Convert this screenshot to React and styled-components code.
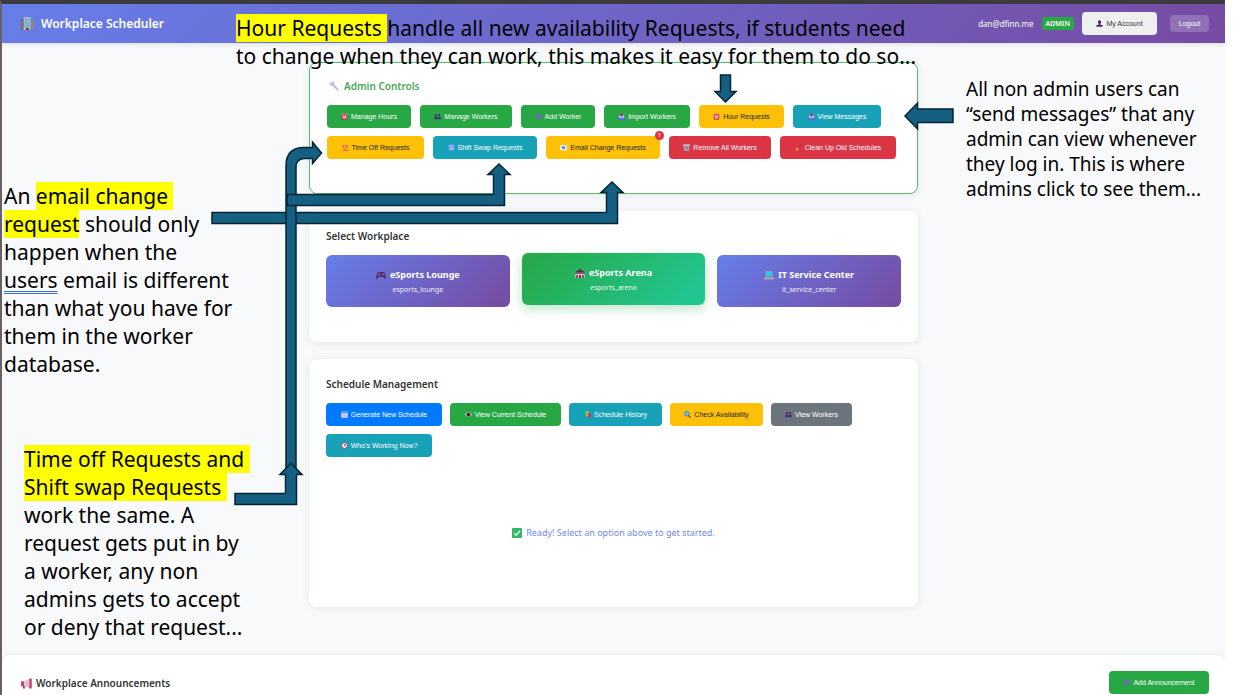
import React from "react";
import styled, { createGlobalStyle, css } from "styled-components";

const Global = createGlobalStyle`
  *, *::before, *::after { box-sizing: border-box; }
  body { margin: 0; background: #fff; font-family: "Noto Sans", "Open Sans", sans-serif; color: #333; }
  h1, h2, p { margin: 0; }
  button { font: inherit; border: 0; cursor: pointer; }
`;

const Slide = styled.div`
  position: relative;
  padding-right: 16px;
`;

const Page = styled.div`
  display: flex;
  flex-direction: column;
  min-height: 100vh;
  background: #f8f9fb;
  border-top: 4px solid #3b3a3c;
  border-left: 2px solid #6b5f67;
  overflow: hidden;
`;

const Header = styled.header`
  display: flex;
  align-items: center;
  justify-content: space-between;
  height: 39px;
  padding: 0 16px 0 19px;
  background: linear-gradient(135deg, #667eea 0%, #764ba2 100%);
  box-shadow: 0 1px 5px rgba(0, 0, 0, 0.12);
`;

const Brand = styled.h1`
  display: flex;
  align-items: center;
  gap: 7px;
  color: #fff;
  font-size: 12px;
  font-weight: 600;
  line-height: 16px;
`;

const Account = styled.div`
  display: flex;
  align-items: center;
  gap: 8px;
  color: #fff;
  font-size: 8px;
`;

const RoleBadge = styled.span`
  padding: 0 4px;
  border-radius: 2px;
  background: #28a745;
  font-size: 7px;
  font-weight: 600;
  line-height: 13px;
`;

const AccountButton = styled.button`
  display: flex;
  align-items: center;
  justify-content: center;
  gap: 3px;
  width: 75px;
  height: 23px;
  border-radius: 4px;
  background: #efefef;
  color: #333;
  font-family: "Liberation Sans", Arial, sans-serif;
  font-size: 7px;
`;

const LogoutButton = styled.button`
  width: 39px;
  height: 17px;
  margin-left: 5px;
  padding: 0;
  border-radius: 4px;
  background: rgba(255, 255, 255, 0.2);
  color: #fff;
  font-family: "Liberation Sans", Arial, sans-serif;
  font-size: 7px;
`;

const Main = styled.main`
  display: flex;
  flex-direction: column;
  gap: 17px;
  width: 100%;
  max-width: 609px;
  margin: 19px auto 48px;
`;

const Card = styled.section`
  padding: 17px 17px ${(p) => p.$bottom}px;
  border-radius: 8px;
  background: #fff;
  box-shadow: 0 1px 8px rgba(0, 0, 0, 0.08);
  ${(p) =>
    p.$outlined &&
    css`
      padding-top: 15px;
      border: 1px solid #5cb971;
    `}
`;

const CardTitle = styled.h2`
  display: flex;
  align-items: center;
  gap: 5px;
  margin-bottom: 11px;
  color: #333;
  font-size: 10px;
  font-weight: 600;
  line-height: 16px;
  ${(p) =>
    p.$green &&
    css`
      padding-left: 2px;
      color: #45a85c;
    `}
`;

const ButtonRow = styled.div`
  display: flex;
  flex-wrap: wrap;
  gap: 8px ${(p) => p.$gap}px;
`;

const tones = {
  green: ["#28a745", "#fff"],
  yellow: ["#ffc107", "#212529"],
  teal: ["#17a2b8", "#fff"],
  red: ["#dc3545", "#fff"],
  blue: ["#007bff", "#fff"],
  gray: ["#6c757d", "#fff"],
};

const ActionButton = styled.button`
  position: relative;
  display: inline-flex;
  align-items: center;
  justify-content: center;
  gap: 3px;
  min-width: ${(p) => p.$width}px;
  height: 23px;
  padding: 0 2px;
  border-radius: 4px;
  background: ${(p) => tones[p.$tone][0]};
  color: ${(p) => tones[p.$tone][1]};
  font-family: "Liberation Sans", Arial, sans-serif;
  font-size: 7px;
  line-height: 8px;
  white-space: nowrap;
`;

const AlertDot = styled.span`
  position: absolute;
  top: -5px;
  right: -4px;
  width: 9px;
  height: 9px;
  border-radius: 50%;
  background: #dc3545;
  color: #fff;
  font-size: 6px;
  font-weight: 700;
  line-height: 9px;
  text-align: center;
`;

const WorkplaceGrid = styled.div`
  display: grid;
  grid-template-columns: repeat(3, 1fr);
  gap: 12px;
`;

const WorkplaceCard = styled.button`
  display: flex;
  flex-direction: column;
  align-items: center;
  justify-content: center;
  gap: 3px;
  height: 52px;
  padding: 2px 0 0;
  border-radius: 6px;
  background: linear-gradient(135deg, #667eea 0%, #764ba2 100%);
  color: #fff;
  ${(p) =>
    p.$active &&
    css`
      background: linear-gradient(135deg, #28a745 0%, #20c997 100%);
      box-shadow: 0 4px 12px rgba(40, 167, 69, 0.3);
      transform: translateY(-2px);
    `}
`;

const WorkplaceName = styled.span`
  display: flex;
  align-items: center;
  gap: 4px;
  font-size: 9px;
  font-weight: 700;
  line-height: 13px;
`;

const WorkplaceId = styled.span`
  font-size: 7px;
  line-height: 12px;
  opacity: 0.9;
`;

const Status = styled.p`
  display: flex;
  align-items: center;
  justify-content: center;
  gap: 4px;
  margin-top: 68px;
  color: #7389e8;
  font-size: 9px;
  line-height: 16px;
`;

const Announcements = styled.section`
  display: flex;
  flex: 1;
  align-items: flex-start;
  justify-content: space-between;
  padding: 16px 16px 0 19px;
  border-radius: 8px 8px 0 0;
  background: #fff;
  box-shadow: 0 0 6px rgba(0, 0, 0, 0.07);
`;

const AnnouncementsTitle = styled.h2`
  display: flex;
  align-items: center;
  gap: 4px;
  font-size: 10px;
  font-weight: 600;
  line-height: 24px;
`;

const Note = styled.p`
  position: absolute;
  top: ${(p) => p.$top}px;
  left: ${(p) => p.$left}px;
  color: #000;
  font-size: ${(p) => (p.$small ? 19 : 21)}px;
  line-height: ${(p) => (p.$small ? 25 : 28)}px;
  white-space: pre;
`;

const Highlight = styled.mark`
  background: #ff0;
  color: inherit;
`;

const Grammar = styled.span`
  text-decoration: underline double #3a6fd8 1px;
  text-underline-offset: 3px;
  text-decoration-skip-ink: none;
`;

const ArrowLayer = styled.svg`
  position: absolute;
  top: 0;
  left: 0;
  pointer-events: none;
`;

const IconSvg = styled.svg`
  flex: none;
  width: ${(p) => p.$size}px;
  height: ${(p) => p.$size}px;
`;

const people = (
  <g fill="#4a2a7a">
    <circle cx="2.8" cy="3" r="1.7" />
    <circle cx="7.2" cy="3" r="1.7" />
    <path d="M.2 9V6.6Q.4 5.2 2 5.2H3.800Q4.700 5.200 4.800 6.200V9ZM5.200 9V6.200Q5.300 5.200 6.200 5.200H8Q9.600 5.200 9.800 6.600V9Z" />
  </g>
);
const inbox = (
  <g>
    <path d="M1 3.500L0 6.500V10H10V6.500L9 3.500Z" fill="#4f6fe0" />
    <path d="M1.500 3.500H8.500L9.200 6.500H6.800L6 7.500H4L3.200 6.500H.8Z" fill="#c3d6fb" />
    <path d="M4 0H6V3H7.600L5 6.200 2.400 3H4Z" fill="#c42a68" />
  </g>
);

const glyphs = {
  building: (
    <g>
      <path d="M0 2L2.500 1V10H0Z" fill="#6f6a78" />
      <path d="M2 0H7.500V10H2Z" fill="#b7b3c2" />
      <path d="M7.500 1.500L10 2.300V10H7.500Z" fill="#8a8494" />
      <path d="M3 1.200H4.300V2.700H3ZM5.200 1.200H6.500V2.700H5.200ZM3 3.600H4.300V5.100H3ZM5.200 3.600H6.500V5.100H5.200ZM3 6H4.300V7.500H3ZM5.200 6H6.500V7.500H5.200Z" fill="#2fb8e8" />
      <path d="M4 8.300H5.800V10H4Z" fill="#4a3238" />
    </g>
  ),
  wrench: (
    <path d="M1.200 1L3 2.700 3.800 2 2.300.4Q4.600 0 5.200 1.900L5 3.200 9.500 7.900Q9.900 9.400 8.300 9.500L3.700 4.800Q1.500 5.200.6 3.300Q.4 2 1.200 1Z" fill="#c3b6d6" />
  ),
  user: (
    <g fill="#45256f">
      <ellipse cx="5" cy="3" rx="2.300" ry="2.800" />
      <path d="M4 5H6V6.400L9.500 7.400V9.800H.5V7.400L4 6.400Z" />
    </g>
  ),
  alarm: (
    <g>
      <circle cx="2" cy="1.700" r="1.500" fill="#e8a33a" />
      <circle cx="8" cy="1.700" r="1.500" fill="#e8a33a" />
      <path d="M2 8L1 10H2.500L3.500 9ZM8 8L9 10H7.500L6.500 9Z" fill="#c22b4a" />
      <circle cx="5" cy="5.300" r="4.200" fill="#e23b58" />
      <circle cx="5" cy="5.300" r="2.500" fill="#fbd3da" />
      <path d="M5 3.500V5.400H6.500" fill="none" stroke="#7b4350" strokeWidth=".8" />
    </g>
  ),
  people,
  plus: <path d="M4 0H6V4H10V6H6V10H4V6H0V4H4Z" fill="#8f55d6" />,
  inbox,
  beach: (
    <g>
      <path d="M.5 5Q1 1 5 1Q8.500 1.300 9.500 4.500Z" fill="#e5484d" />
      <path d="M3.300 4.800Q3.500 2 5 1Q6.500 2 6.300 4.700Z" fill="#ffd7cf" />
      <path d="M4.700 4.600H5.500L6 9H5.200Z" fill="#8a4a2a" />
      <path d="M0 8.500Q4 7 10 8.500V10H0Z" fill="#e8704a" />
    </g>
  ),
  swap: (
    <g>
      <rect width="10" height="10" rx="1" fill="#4a90f0" />
      <path d="M2 4.500V3H7M6 1.600L7.700 3 6 4.400M8 5.500V7H3M4 5.600L2.300 7 4 8.400" fill="none" stroke="#fff" strokeWidth="1" />
    </g>
  ),
  email: (
    <g>
      <rect y="1.500" width="10" height="7.500" rx=".8" fill="#e4ecfa" />
      <path d="M0 2L5 5.700 10 2" fill="none" stroke="#a9bce0" strokeWidth=".7" />
      <circle cx="5" cy="5.200" r="2.100" fill="#3c78dc" />
    </g>
  ),
  trash: (
    <g>
      <path d="M.7 1.500H9.300L8.300 10H1.700Z" fill="#b7b0bd" />
      <path d="M.3.5H9.700V2H.3Z" fill="#d7d2dc" />
      <path d="M3.300 2.500L3.600 9M5 2.500V9M6.700 2.500L6.400 9M1.500 4.500H8.500M1.700 7H8.300" stroke="#77707f" strokeWidth=".6" />
    </g>
  ),
  broom: (
    <g>
      <path d="M9.500.3L4.500 5.800" stroke="#7c3e24" strokeWidth="1.200" />
      <path d="M3.500 4.800L5.700 7Q4 9.500.5 9.700Q1 6.500 3.500 4.800Z" fill="#f2a23c" />
    </g>
  ),
  calendar: (
    <g>
      <rect x=".3" y=".8" width="9.400" height="9" rx=".8" fill="#e5e3f3" />
      <path d="M.3.800H9.700V3.200H.3Z" fill="#4a90e8" />
      <path d="M2.700 4V9.200M5 4V9.200M7.300 4V9.200M1 5.700H9M1 7.700H9" stroke="#a9a4c9" strokeWidth=".6" />
    </g>
  ),
  eye: (
    <g>
      <path d="M0 5Q5-1.500 10 5Q5 11 0 5Z" fill="#f3eef2" />
      <circle cx="5" cy="5" r="3" fill="#6a2f33" />
      <circle cx="5" cy="5" r="1.600" fill="#1d1218" />
    </g>
  ),
  books: (
    <g>
      <path d="M0 1L3 0 4.500 7 1.500 8Z" fill="#44b05a" />
      <path d="M3 .5L6.500 0 7 7 3.800 8Z" fill="#b9c94a" />
      <path d="M5 3L8.500 2 10 9 6.500 10Z" fill="#d8375c" />
    </g>
  ),
  search: (
    <g>
      <path d="M6.300 6.300L9.300 9.300" stroke="#5d3b57" strokeWidth="1.800" />
      <circle cx="4" cy="4" r="3.300" fill="#5cc4f5" stroke="#3573b8" strokeWidth="1" />
    </g>
  ),
  clock: (
    <g>
      <circle cx="5" cy="5" r="4.200" fill="#f6eef0" stroke="#9b3c4a" strokeWidth="1.300" />
      <path d="M5 2.500V5.300L7 5.200" fill="none" stroke="#3c2b33" strokeWidth=".9" />
    </g>
  ),
  gamepad: (
    <g>
      <path d="M2 2H8Q9.300 2.500 10 8.500Q8.500 9.500 7 7H3Q1.500 9.500 0 8.500Q.7 2.500 2 2Z" fill="#4c3470" />
      <circle cx="3" cy="4.500" r="1" fill="#8d7aa8" />
      <circle cx="7.200" cy="4.500" r="1" fill="#b44f78" />
    </g>
  ),
  arena: (
    <g>
      <path d="M5 0V2.500" stroke="#6b2f4c" strokeWidth=".7" />
      <path d="M1 3.500L5 1.300 9 3.500V5H1Z" fill="#50304b" />
      <path d="M.3 4.500H9.700V10H.3Z" fill="#e6c4cf" />
      <path d="M0 4.500H10V5.700H0ZM1.300 7H2.800V10H1.300ZM4 7H6V10H4ZM7.200 7H8.700V10H7.200Z" fill="#5f3350" />
    </g>
  ),
  laptop: (
    <g>
      <path d="M1.200.8H8.800V6.800H1.200Z" fill="#8d8794" />
      <path d="M1.800 1.300H8.200V6.300H1.800Z" fill="#35c6ee" />
      <path d="M1 6.800H9L10 9.300H0Z" fill="#b9b2bc" />
      <path d="M2 7.500H8" stroke="#6c6572" strokeWidth=".6" />
    </g>
  ),
  check: (
    <g>
      <rect width="10" height="10" rx="1" fill="#2fb866" />
      <path d="M2.200 5.200L4.200 7.300 8 2.800" fill="none" stroke="#fff" strokeWidth="1.400" />
    </g>
  ),
  megaphone: (
    <g>
      <path d="M0 3H3V7.500H0Z" fill="#e0356a" />
      <path d="M3 3L7.500 1V9L3 7.500Z" fill="#cfc9dc" />
      <path d="M7.500.5H9.800V9.500H7.500Z" fill="#e0356a" />
      <path d="M1.500 7.500H3.500V9.500H2Z" fill="#8a3c60" />
    </g>
  ),
};

function Icon({ name, size = 7 }) {
  return (
    <IconSvg $size={size} viewBox="0 0 10 10" aria-hidden="true">
      {glyphs[name]}
    </IconSvg>
  );
}

const adminActions = [
  ["alarm", "Manage Hours", "green", 84],
  ["people", "Manage Workers", "green", 92],
  ["plus", "Add Worker", "green", 74],
  ["inbox", "Import Workers", "green", 86],
  ["alarm", "Hour Requests", "yellow", 85],
  ["inbox", "View Messages", "teal", 88],
  ["beach", "Time Off Requests", "yellow", 97],
  ["swap", "Shift Swap Requests", "teal", 104],
  ["email", "Email Change Requests", "yellow", 114, true],
  ["trash", "Remove All Workers", "red", 102],
  ["broom", "Clean Up Old Schedules", "red", 116],
];

const scheduleActions = [
  ["calendar", "Generate New Schedule", "blue", 116],
  ["eye", "View Current Schedule", "green", 111],
  ["books", "Schedule History", "teal", 93],
  ["search", "Check Availability", "yellow", 93],
  ["people", "View Workers", "gray", 81],
  ["clock", "Who's Working Now?", "teal", 106],
];

const workplaces = [
  ["gamepad", "eSports Lounge", "esports_lounge"],
  ["arena", "eSports Arena", "esports_arena", true],
  ["laptop", "IT Service Center", "it_service_center"],
];

function Actions({ items, gap = 8 }) {
  return (
    <ButtonRow $gap={gap}>
      {items.map(([icon, label, tone, width, alert]) => (
        <ActionButton key={label} type="button" $tone={tone} $width={width}>
          <Icon name={icon} />
          {label}
          {alert && <AlertDot>!</AlertDot>}
        </ActionButton>
      ))}
    </ButtonRow>
  );
}

function Arrows() {
  return (
    <ArrowLayer width="960" height="510" viewBox="0 0 960 510" aria-hidden="true">
      <g fill="#156082" stroke="#042433" strokeWidth="1.500" strokeLinejoin="miter">
        <path d="M720.500 75H730.500V91.500H736L725.500 102 715 91.500H720.500Z" />
        <path d="M953 109V122.500H917.500V129L905 116 917.500 103V109Z" />
        <path d="M212 212.500H606.500V192.500H601L612 182 623 192.500H617.500V223.500H212Z" />
        <path d="M286 472V166Q286 147.500 304 147.500H312.500V142L321.500 153 312.500 163.500V158.500H305Q296 158.500 296 167V472Z" />
        <path d="M287 194.500H493.500V174.500H488L499 164 510 174.500H504.500V205.500H287Z" />
        <path d="M235 493.500H285.500V474.500H280L291 463 302 474.500H296.500V504.500H235Z" />
      </g>
    </ArrowLayer>
  );
}

export default function App() {
  return (
    <Slide>
      <Global />
      <Page>
        <Header>
          <Brand>
            <Icon name="building" size={13} />
            Workplace Scheduler
          </Brand>
          <Account>
            <span>dan@dfinn.me</span>
            <RoleBadge>ADMIN</RoleBadge>
            <AccountButton type="button">
              <Icon name="user" />
              My Account
            </AccountButton>
            <LogoutButton type="button">Logout</LogoutButton>
          </Account>
        </Header>
        <Main>
          <Card $outlined $bottom={34}>
            <CardTitle $green>
              <Icon name="wrench" size={10} />
              Admin Controls
            </CardTitle>
            <Actions items={adminActions} gap={9} />
          </Card>
          <Card $bottom={35}>
            <CardTitle>Select Workplace</CardTitle>
            <WorkplaceGrid>
              {workplaces.map(([icon, name, id, active]) => (
                <WorkplaceCard key={id} type="button" $active={active}>
                  <WorkplaceName>
                    <Icon name={icon} size={10} />
                    {name}
                  </WorkplaceName>
                  <WorkplaceId>{id}</WorkplaceId>
                </WorkplaceCard>
              ))}
            </WorkplaceGrid>
          </Card>
          <Card $bottom={66}>
            <CardTitle>Schedule Management</CardTitle>
            <Actions items={scheduleActions} />
            <Status>
              <Icon name="check" size={10} />
              Ready! Select an option above to get started.
            </Status>
          </Card>
        </Main>
        <Announcements>
          <AnnouncementsTitle>
            <Icon name="megaphone" size={11} />
            Workplace Announcements
          </AnnouncementsTitle>
          <ActionButton type="button" $tone="green" $width={100}>
            <Icon name="plus" />
            Add Announcement
          </ActionButton>
        </Announcements>
      </Page>

      <Arrows />
      <Note $top={14} $left={236}>
        <Highlight>Hour Requests </Highlight>handle all new availability Requests, if students need{"\n"}
        to change when they can work, this makes it easy for them to do so...
      </Note>
      <Note $small $top={77} $left={966}>
        All non admin users can{"\n"}“send messages” that any{"\n"}admin can view whenever{"\n"}they log in. This is where{"\n"}admins click to see them...
      </Note>
      <Note $top={182} $left={4}>
        An <Highlight>email change </Highlight>{"\n"}
        <Highlight>request</Highlight> should only{"\n"}happen when the{"\n"}
        <Grammar>users</Grammar> email is different{"\n"}than what you have for{"\n"}them in the worker{"\n"}database.
      </Note>
      <Note $top={445} $left={24}>
        <Highlight>Time off Requests and </Highlight>{"\n"}
        <Highlight>Shift swap Requests </Highlight>{"\n"}work the same. A{"\n"}request gets put in by{"\n"}a worker, any non{"\n"}admins gets to accept{"\n"}or deny that request...
      </Note>
    </Slide>
  );
}
